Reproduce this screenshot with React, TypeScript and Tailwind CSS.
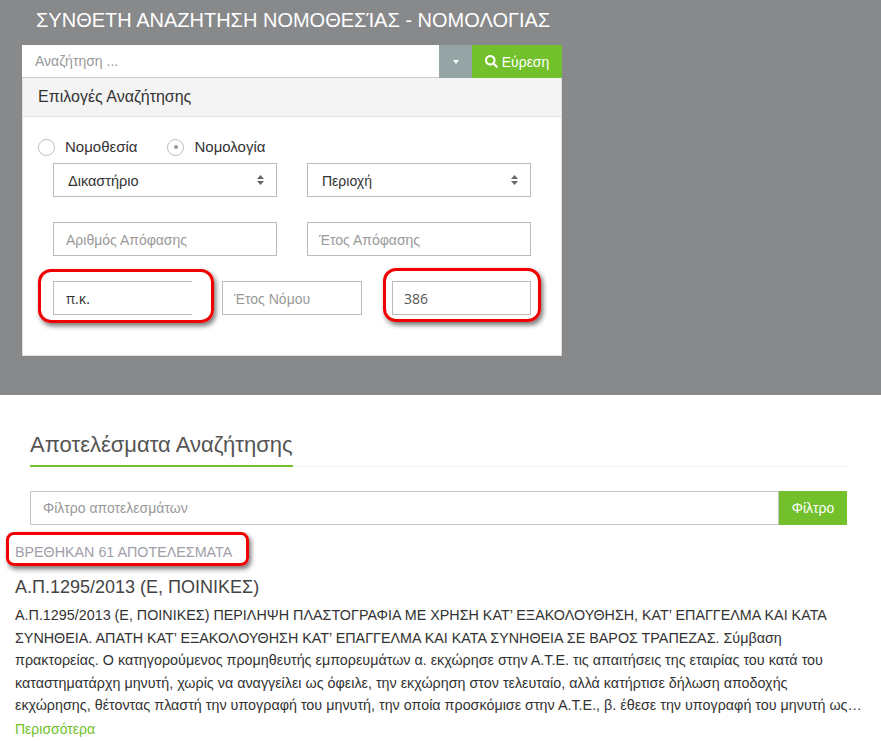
import { FaSearch } from "react-icons/fa";

function Chevrons() {
  return (
    <svg width="7" height="10" viewBox="0 0 7 10" className="text-[#666]">
      <path d="M3.5 0 L7 4 H0 Z M3.5 10 L7 6 H0 Z" fill="currentColor" />
    </svg>
  );
}

function Field({ children, className = "" }: { children: React.ReactNode; className?: string }) {
  return (
    <div className={"flex h-[34px] items-center border border-[#bbbbbb] bg-white text-sm " + className}>
      {children}
    </div>
  );
}

function Radio({ label, checked }: { label: string; checked?: boolean }) {
  return (
    <div className="flex items-center">
      <span className="flex h-[17px] w-[17px] items-center justify-center rounded-full border border-[#bdbdbd] bg-white">
        {checked && <span className="h-1 w-1 rounded-full bg-[#999]" />}
      </span>
      <span className="ml-[10px] text-[15px] text-[#333]">{label}</span>
    </div>
  );
}

function Mark({ className }: { className: string }) {
  return (
    <div
      className={
        "pointer-events-none absolute rounded-[13px] border-[3px] border-[#f00000] shadow-[2px_3px_5px_rgba(0,0,0,0.55)] " +
        className
      }
    />
  );
}

export default function App() {
  return (
    <div className="h-[741px] w-[881px] overflow-hidden bg-white font-['Liberation_Sans',Arial,sans-serif]">
      <section className="h-[395px] bg-[#88898b] pl-[22px]">
        <h1 className="pl-[14px] pt-[8px] text-[20px] leading-[24px] text-white">
          ΣΥΝΘΕΤΗ ΑΝΑΖΗΤΗΣΗ ΝΟΜΟΘΕΣΊΑΣ - ΝΟΜΟΛΟΓΙΑΣ
        </h1>
        <div className="mt-[13px] w-[540px]">
          <div className="flex h-[33px]">
            <div className="flex flex-1 items-center border-b border-[#cccccc] bg-white pl-[13px] text-sm text-[#999]">
              Αναζήτηση ...
            </div>
            <div className="flex w-[33px] items-center justify-center bg-[#95a5a6]">
              <span className="h-0 w-0 border-x-[3.5px] border-t-[4px] border-x-transparent border-t-white" />
            </div>
            <div className="flex w-[90px] items-center justify-center gap-[4px] bg-[#72c02c] text-sm text-white">
              <FaSearch size={13} />
              Εύρεση
            </div>
          </div>
          <div className="border-x border-b border-[#dddddd] bg-white">
            <div className="flex h-[39px] items-center border-b border-[#e4e4e4] bg-[#f4f4f4] pl-[15px] text-base text-[#333]">
              Επιλογές Αναζήτησης
            </div>
            <div className="relative h-[238px] px-[15px]">
              <div className="flex gap-[30px] pt-[19px]">
                <Radio label="Νομοθεσία" />
                <Radio label="Νομολογία" checked />
              </div>
              <div className="mt-[4px] grid grid-cols-[224px_224px] gap-x-[30px] pl-[15px]">
                <Field className="justify-between pl-[14px] pr-[12px] text-[14.5px] text-[#333]">
                  <span className="pt-[3px]">Δικαστήριο</span>
                  <Chevrons />
                </Field>
                <Field className="justify-between pl-[14px] pr-[12px] text-[#333]">
                  <span className="pt-[3px]">Περιοχή</span>
                  <Chevrons />
                </Field>
              </div>
              <div className="mt-[25px] grid grid-cols-[224px_224px] gap-x-[30px] pl-[15px]">
                <Field className="pl-[12px] pt-[2px] text-[#999]">Αριθμός Απόφασης</Field>
                <Field className="pl-[11px] pt-[2px] text-[#999]">Έτος Απόφασης</Field>
              </div>
              <div className="mt-[25px] flex pl-[15px]">
                <Field className="w-[139px] border-r-0 pl-[12px] pt-[2px] font-['Open_Sans',sans-serif] text-[#333]">π.κ.</Field>
                <Field className="ml-[30px] w-[140px] pl-[11px] pt-[2px] text-[#999]">Έτος Νόμου</Field>
                <Field className="ml-[30px] w-[139px] pl-[11px] pt-[2px] font-['Open_Sans',sans-serif] text-[#555]">386</Field>
              </div>
              <Mark className="left-[15px] top-[152px] h-[54px] w-[176px]" />
              <Mark className="left-[360px] top-[151px] h-[54px] w-[158px]" />
            </div>
          </div>
        </div>
      </section>

      <section className="relative px-[30px] pt-[35px]">
        <div className="w-[817px] border-b border-dotted border-[#e4e4e4]">
          <h2 className="-mb-px inline-block border-b-2 border-[#72c02c] pb-[5px] text-[22px] leading-[30px] text-[#555]">
            Αποτελέσματα Αναζήτησης
          </h2>
        </div>
        <div className="mt-[24px] flex h-[34px] w-[817px]">
          <div className="flex flex-1 items-center border border-[#c4c4c4] pl-[12px] text-sm text-[#999]">
            Φίλτρο αποτελεσμάτων
          </div>
          <div className="flex w-[68px] items-center justify-center bg-[#72c02c] text-sm text-white">Φίλτρο</div>
        </div>
        <div className="-mx-[15px] mt-[20px] text-[14.3px] leading-[14px] text-[#a09ea8]">ΒΡΕΘΗΚΑΝ 61 ΑΠΟΤΕΛΕΣΜΑΤΑ</div>
        <h3 className="-mx-[15px] mt-[16px] text-[18px] leading-[24px] text-[#444]">Α.Π.1295/2013 (Ε, ΠΟΙΝΙΚΕΣ)</h3>
        <p className="-mx-[15px] mt-[5px] w-[850px] text-[14.33px] leading-[22.5px] text-[#333]">
          Α.Π.1295/2013 (Ε, ΠΟΙΝΙΚΕΣ) ΠΕΡΙΛΗΨΗ ΠΛΑΣΤΟΓΡΑΦΙΑ ΜΕ ΧΡΗΣΗ ΚΑΤ’ ΕΞΑΚΟΛΟΥΘΗΣΗ, ΚΑΤ’ ΕΠΑΓΓΕΛΜΑ ΚΑΙ ΚΑΤΑ
          ΣΥΝΗΘΕΙΑ. ΑΠΑΤΗ ΚΑΤ’ ΕΞΑΚΟΛΟΥΘΗΣΗ ΚΑΤ’ ΕΠΑΓΓΕΛΜΑ ΚΑΙ ΚΑΤΑ ΣΥΝΗΘΕΙΑ ΣΕ ΒΑΡΟΣ ΤΡΑΠΕΖΑΣ. Σύμβαση
          πρακτορείας. Ο κατηγορούμενος προμηθευτής εμπορευμάτων α. εκχώρησε στην Α.Τ.Ε. τις απαιτήσεις της εταιρίας του κατά του
          καταστηματάρχη μηνυτή, χωρίς να αναγγείλει ως όφειλε, την εκχώρηση στον τελευταίο, αλλά κατήρτισε δήλωση αποδοχής
          εκχώρησης, θέτοντας πλαστή την υπογραφή του μηνυτή, την οποία προσκόμισε στην Α.Τ.Ε., β. έθεσε την υπογραφή του μηνυτή ως…
        </p>
        <a className="-mx-[15px] mt-[1px] block text-sm leading-[22px] text-[#72c02c]">Περισσότερα</a>
        <Mark className="left-[6px] top-[137px] h-[34px] w-[243px] !rounded-[8px]" />
      </section>
    </div>
  );
}
